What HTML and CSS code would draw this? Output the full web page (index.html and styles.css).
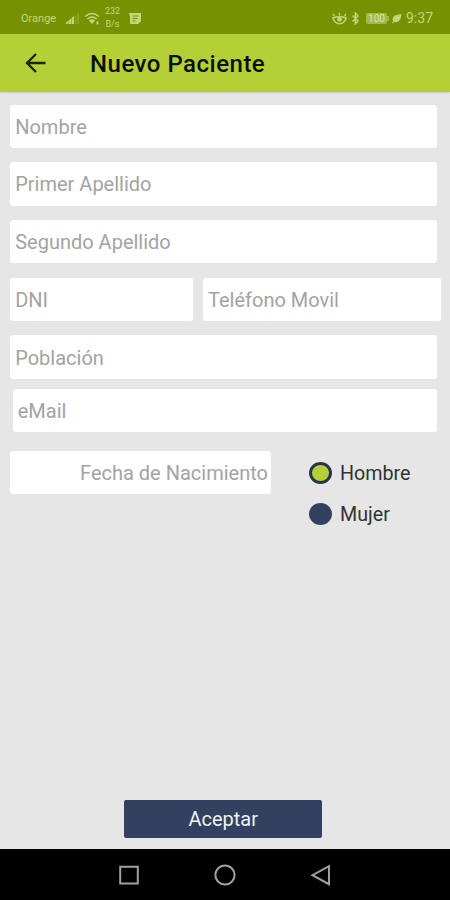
FILE: index.html
```
<!DOCTYPE html>
<html lang="es">
<head>
    <meta charset="utf-8">
    <title>Nuevo Paciente</title>
    <meta name="viewport" content="width=device-width, initial-scale=1.0">
    <link rel="stylesheet" href="styles.css">
</head>
<body>

<div class="wrap">
    <div class="status">
        <span class="operator">Orange</span>
        <svg class="signal" width="15" height="13" viewBox="0 0 15 13">
            <path d="M1 12V10.500L3 9v3zM3.500 12V8.500L6 6.500v5.500zM6.500 12V6L9 4v8z"/>
            <path class="dim" d="M10 12V4l1.500-1.500V12zM12.500 12V2L14 .5V12z"/>
        </svg>
        <svg class="wifi" width="16" height="13" viewBox="0 0 16 13">
            <path class="line" d="M1 4.500Q8-1.500 15 4.500M3.300 7Q8 3 12.700 7"/>
            <path d="M4.800 8.500Q8 6 11.200 8.500L8 12z"/>
            <path d="M12.500 12.500v-3l2 0v3z"/>
        </svg>
        <span class="speed">232<br>B/s</span>
        <svg class="note" width="12" height="11" viewBox="0 0 12 11">
            <path d="M0 0h12v8l-3 3H1V4z"/>
            <path class="cut" d="M3.500 3h6M3.500 5.500h5M3.500 8h3"/>
        </svg>
        <div class="statusRight">
            <svg class="eye" width="15" height="13" viewBox="0 0 15 13">
                <path class="line" d="M.8 6Q7.500 3.500 14.200 6Q12 11.800 7.500 11.800Q3 11.800 .8 6zM2.500 4L1 2M7.500 3.500V.8M12.500 4L14 2"/>
                <circle cx="7.500" cy="7.300" r="2.400"/>
            </svg>
            <svg class="bluetooth" width="9" height="13" viewBox="0 0 9 13">
                <path class="line" d="M1.500 3.500L7 9L4.300 12V1L7 4L1.500 9.500"/>
            </svg>
            <div class="battery">100</div>
            <svg class="leaf" width="11" height="11" viewBox="0 0 10 11">
                <path d="M9.700.8C8.500 2 4.500 1.200 2.200 3.600C.6 5.500.8 7.500 1.800 8.300L.3 10l.8.6L2.700 9C8 10.200 10 5.500 9.700.8z"/>
            </svg>
            <span class="clock">9:37</span>
        </div>
    </div>

    <div class="nav">
        <a class="navBack">
            <svg width="22" height="20" viewBox="0 0 22 20">
                <path d="M11 1L2 10l9 9M2 10h18.500"/>
            </svg>
        </a>
        <h1 class="navFont">Nuevo Paciente</h1>
    </div>

    <form class="patient">
        <input class="field" type="text" placeholder="Nombre">
        <input class="field" type="text" placeholder="Primer Apellido">
        <input class="field" type="text" placeholder="Segundo Apellido">
        <div class="double">
            <input class="field dni" type="text" placeholder="DNI">
            <input class="field phone" type="text" placeholder="Teléfono Movil">
        </div>
        <input class="field" type="text" placeholder="Población">
        <input class="field email" type="text" placeholder="eMail">
        <div class="birth">
            <input class="field date" type="text" placeholder="Fecha de Nacimiento">
            <div class="sex">
                <label class="option"><i class="dot on"></i>Hombre</label>
                <label class="option"><i class="dot"></i>Mujer</label>
            </div>
        </div>
        <button class="accept" type="button">Aceptar</button>
    </form>

    <div class="keys">
        <svg width="22" height="22" viewBox="0 0 22 22"><path d="M2.200 2.700h17.600v16.800H2.200z"/></svg>
        <svg width="22" height="22" viewBox="0 0 22 22"><circle cx="11" cy="11" r="9.600"/></svg>
        <svg width="22" height="22" viewBox="0 0 22 22"><path d="M19 2.200v18L2.500 11.200z"/></svg>
    </div>
</div>

</body>
</html>
```
FILE: styles.css
```
html, body { height:100%;}
body, form, h1, input, button { margin:0; padding:0; font-family:Roboto, sans-serif;}
body { background:#e6e6e6; overflow:hidden;}
input, button { border:0; outline:0;}
svg { display:block; flex:none; fill:none;}

.wrap {
    display:flex;
    flex-direction:column;
    max-width:450px;
    height:900px;
    margin:0 auto;}

/* status bar */
.status {
    display:flex;
    align-items:center;
    box-sizing:border-box;
    height:34px;
    padding:2px 17px 0 21px;
    background:#779200;
    color:#c3d67c;}
.status svg { fill:#c3d67c;}
.status .line { fill:none; stroke:#c3d67c; stroke-width:1.4;}
.status .dim { opacity:.3;}
.status .cut { stroke:#779200; stroke-width:1;}
.operator { width:36px; padding-top:1px; font-size:11px; line-height:33px; white-space:nowrap;}
.signal { margin-left:8px;}
.wifi { margin-left:4px;}
.speed { width:17px; margin-left:4px; font-size:9px; line-height:13px; text-align:center;}
.note { margin-left:8px;}
.statusRight { display:flex; align-items:center; margin-left:auto;}
.bluetooth { margin-left:4px;}
.battery {
    position:relative;
    width:21px;
    height:11px;
    margin-left:6px;
    border-radius:2px;
    background:#a2b951;
    color:#d8e5a4;
    font-size:10px;
    line-height:11px;
    text-align:center;}
.battery:after {
    position:absolute;
    top:3px;
    right:-2px;
    width:2px;
    height:5px;
    background:#a2b951;
    content:"";}
.leaf { margin-left:4px;}
.clock { margin-left:4px; font-size:14px; line-height:20px;}

/* title bar */
.nav {
    display:flex;
    align-items:center;
    height:58px;
    background:#b5cf37;
    box-shadow:0 1px 2px rgba(0, 0, 0, .12);}
.navBack { width:22px; margin-left:25px;}
.navBack svg { stroke:#1c2208; stroke-width:2.3;}
.navFont { padding-top:2px; margin-left:43px; color:#0c1002; font-size:24px; font-weight:500; letter-spacing:.5px; line-height:56px;}

/* form */
.patient {
    display:flex;
    flex:1;
    flex-direction:column;
    padding:12.500px 13px 0 10.200px;}
.field {
    box-sizing:border-box;
    flex:none;
    height:43.500px;
    margin-bottom:14.200px;
    padding:1px 5px 0;
    border-radius:3px;
    background:#fff;
    color:#333;
    font-size:20px;}
.field::placeholder { color:#a3a3a3; opacity:1;}
.double { display:flex; gap:10px; margin-right:-4px;}
.dni { width:182.800px;}
.phone { flex:1; min-width:0;}
.email { margin:-4.200px 0 18.500px 2.500px; padding-top:0;}
.birth { display:flex;}
.date { width:260.800px; padding:1px 3px 0; text-align:right;}
.sex { margin-left:38px;}
.option { display:flex; align-items:center; height:41px; color:#333; font-size:19.700px;}
.option:first-child { margin-top:2px;}
.dot { box-sizing:border-box; width:23px; height:22px; margin-right:8px; border-radius:50%; background:#31415f;}
.dot.on { border:3.500px solid #26364a; background:#b5cf37;}
.accept {
    width:198px;
    height:38.500px;
    margin:auto auto 11px 114px;
    padding-top:1px;
    border-radius:2px;
    background:#31415f;
    color:#eef1f6;
    font-size:20px;}

/* system keys */
.keys {
    display:flex;
    align-items:center;
    gap:74px;
    height:51px;
    padding-left:118px;
    background:#000;}
.keys svg { stroke:#a0a0a0; stroke-width:2;}
```
